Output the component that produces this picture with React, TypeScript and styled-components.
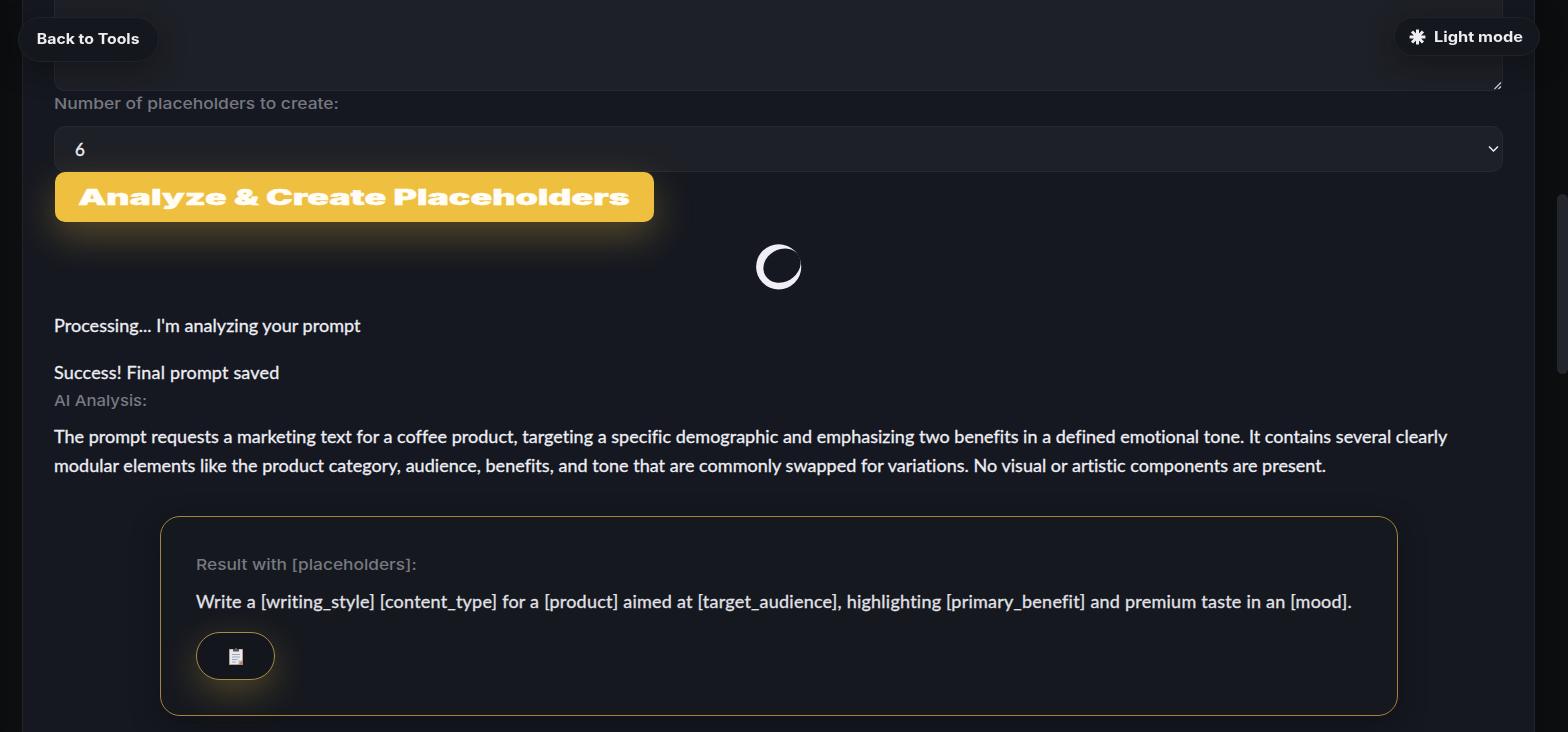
import React from "react";
import styled, { createGlobalStyle } from "styled-components";

const GlobalStyle = createGlobalStyle`
  * { box-sizing: border-box; }
  body {
    margin: 0;
    background: #0c0d0f;
    color: #eeeef4;
    font-family: Lato, "Liberation Sans", sans-serif;
    overflow: hidden;
  }
  p { margin: 0; }
`;

const Page = styled.div`
  height: 732px;
  overflow: hidden;
  padding: 0 33px 0 22px;
  background: linear-gradient(90deg, #0b0c0d 0, #0e0f10 22px, #0b0c0e 1535px, #0d0e10 100%);
`;

const Panel = styled.main`
  display: flex;
  flex-direction: column;
  align-items: flex-start;
  height: 732px;
  padding: 0 31px;
  border: solid #22242a;
  border-width: 0 1px;
  background: #151820;
`;

const PromptField = styled.div`
  display: flex;
  justify-content: flex-end;
  align-items: flex-end;
  width: 100%;
  height: 91px;
  border: 1px solid #262930;
  border-top: 0;
  border-radius: 0 0 11px 11px;
  background: #1e2027;
`;

const Label = styled.div`
  height: 25px;
  margin-bottom: 9px;
  line-height: 25px;
  color: #777980;
  font-family: Inter, "Liberation Sans", sans-serif;
  font-size: 15px;
  font-weight: 450;
`;

const SelectLabel = styled(Label)`
  margin-bottom: 10px;
`;

const Wide = styled.span<{ $stretch: number; $from?: string }>`
  display: inline-block;
  white-space: nowrap;
  transform: scaleX(${(p) => p.$stretch});
  transform-origin: ${(p) => p.$from ?? "left"} center;
`;

const CountSelect = styled.div`
  display: flex;
  justify-content: space-between;
  align-items: center;
  width: 100%;
  height: 46px;
  padding: 0 3px 0 20px;
  border: 1px solid #262930;
  border-radius: 11px;
  background: #1e2027;
  font-size: 17px;
  -webkit-text-stroke: 0.35px currentColor;
`;

const AnalyzeButton = styled.button`
  display: flex;
  justify-content: center;
  align-items: center;
  width: 599px;
  height: 50px;
  margin-left: 0.5px;
  padding: 0;
  border: 0;
  border-radius: 10px;
  background: #efbf40;
  box-shadow: 0 14px 38px rgba(239, 191, 64, 0.3);
  color: #fffdf5;
  font: 900 21px Inter, "Liberation Sans", sans-serif;
  -webkit-text-stroke: 0.4px currentColor;
`;

const Loader = styled.div`
  align-self: center;
  height: 46px;
  margin: 22px 0 21px;
`;

const Copy = styled.p<{ $track?: number; $gap?: number }>`
  margin-bottom: ${(p) => p.$gap ?? 0}px;
  font-size: 18px;
  line-height: 29px;
  letter-spacing: ${(p) => p.$track ?? 0}px;
  white-space: nowrap;
  -webkit-text-stroke: 0.3px currentColor;
`;

const StatusCopy = styled(Copy)`
  &:last-of-type { margin-bottom: 0; }
`;

const AnalysisLabel = styled(Label)`
  margin-top: 1px;
`;

const ResultCard = styled.section`
  display: flex;
  flex-direction: column;
  align-items: flex-start;
  align-self: center;
  width: 1238px;
  height: 200px;
  margin-top: 36px;
  padding: 35px 35.5px;
  border: 1px solid #a2853f;
  border-radius: 20px;
  background: #15181f;
  box-shadow: 0 8px 26px rgba(12, 12, 14, 0.55);
  color: #e2e2e8;
`;

const ResultLabel = styled(Label)`
  margin-bottom: 10px;
`;

const CopyButton = styled.button`
  display: flex;
  justify-content: center;
  align-items: center;
  width: 79px;
  height: 48px;
  margin-top: 16px;
  padding: 1px 0 0;
  border: 1px solid #a88b44;
  border-radius: 24px;
  background: #14161e;
  box-shadow: 0 12px 36px rgba(239, 191, 64, 0.27);
`;

const Pill = styled.button`
  position: fixed;
  top: 17px;
  display: flex;
  justify-content: center;
  align-items: center;
  padding: 0;
  border: 1px solid #20232b;
  border-radius: 24px;
  background: #15171e;
  box-shadow: 0 8px 28px rgba(10, 10, 12, 0.45);
  color: #ededf2;
  font: 700 14.5px Inter, "Liberation Sans", sans-serif;
`;

const BackPill = styled(Pill)`
  left: 18px;
  width: 141px;
  height: 45px;
  padding-bottom: 2px;
`;

const ThemePill = styled(Pill)`
  right: 28px;
  width: 146px;
  height: 39px;
  justify-content: flex-start;
  gap: 8px;
  padding-left: 14px;
`;

const ScrollThumb = styled.div`
  position: fixed;
  top: 194px;
  right: 0;
  width: 11px;
  height: 180px;
  border-radius: 6px;
  background: #24262e;
`;

const ResizeGrip = () => (
  <svg width="9" height="9" viewBox="0 0 9 9" stroke="#d5d5d8" strokeWidth="1.1">
    <path d="M1.5 8 8 1.5M5.5 8 8 5.5" />
  </svg>
);

const Chevron = () => (
  <svg width="11" height="8" viewBox="0 0 11 8" fill="none" stroke="#f0f0f3" strokeWidth="1.5">
    <path d="M1 1.5 5.5 6 10 1.5" />
  </svg>
);

const Crescent = () => (
  <svg width="46" height="46" viewBox="0 0 46 46">
    <circle cx="22.7" cy="22.8" r="22.6" fill="#f0eff5" />
    <ellipse cx="26" cy="21.6" rx="19.4" ry="16.2" fill="#151820" transform="rotate(-31 26 21.6)" />
  </svg>
);

const Star = () => (
  <svg width="17" height="16" viewBox="-8.5 -8 17 16" stroke="#ededf2" strokeWidth="3">
    <path d="M0-7.6V7.6M-7.9 0H7.9M-5.5-5.5 5.5 5.5M-5.5 5.5 5.5-5.5" />
  </svg>
);

const Clipboard = () => (
  <svg width="14" height="17" viewBox="0 0 14 17">
    <path fill="#a98678" d="M0 1h14v16H0z" />
    <path fill="#e9e9ee" d="M.8 1.5h12.4v10.8L9.5 16.2H.8z" />
    <path fill="#c5bb91" d="M9.5 16.2v-3.8h3.7z" />
    <path fill="#56545c" d="M4 1h2V0h2v1h2v2.6H4z" />
    <path stroke="#9aa8c4" d="M3 6.5h8M3 9h8M3 11.5h5.5M3 14h4" />
  </svg>
);

export default function App() {
  return (
    <>
      <GlobalStyle />
      <Page>
        <Panel>
          <PromptField><ResizeGrip /></PromptField>
          <SelectLabel><Wide $stretch={1.162}>Number of placeholders to create:</Wide></SelectLabel>
          <CountSelect>6<Chevron /></CountSelect>
          <AnalyzeButton>
            <Wide $stretch={1.705} $from="center">Analyze &amp; Create Placeholders</Wide>
          </AnalyzeButton>
          <Loader><Crescent /></Loader>
          <StatusCopy $track={0.04} $gap={18}>Processing... I'm analyzing your prompt</StatusCopy>
          <Copy $track={0.17}>Success! Final prompt saved</Copy>
          <AnalysisLabel><Wide $stretch={1.11}>AI Analysis:</Wide></AnalysisLabel>
          <Copy $track={0.026}>
            The prompt requests a marketing text for a coffee product, targeting a specific demographic and emphasizing two benefits in a defined emotional tone. It contains several clearly
          </Copy>
          <Copy $track={0.032}>
            modular elements like the product category, audience, benefits, and tone that are commonly swapped for variations. No visual or artistic components are present.
          </Copy>
          <ResultCard>
            <ResultLabel><Wide $stretch={1.153}>Result with [placeholders]:</Wide></ResultLabel>
            <Copy $track={0.235}>
              Write a [writing_style] [content_type] for a [product] aimed at [target_audience], highlighting [primary_benefit] and premium taste in an [mood].
            </Copy>
            <CopyButton aria-label="Copy"><Clipboard /></CopyButton>
          </ResultCard>
        </Panel>
      </Page>
      <BackPill><Wide $stretch={1.09} $from="center">Back to Tools</Wide></BackPill>
      <ThemePill><Star /><Wide $stretch={1.127}>Light mode</Wide></ThemePill>
      <ScrollThumb />
    </>
  );
}
